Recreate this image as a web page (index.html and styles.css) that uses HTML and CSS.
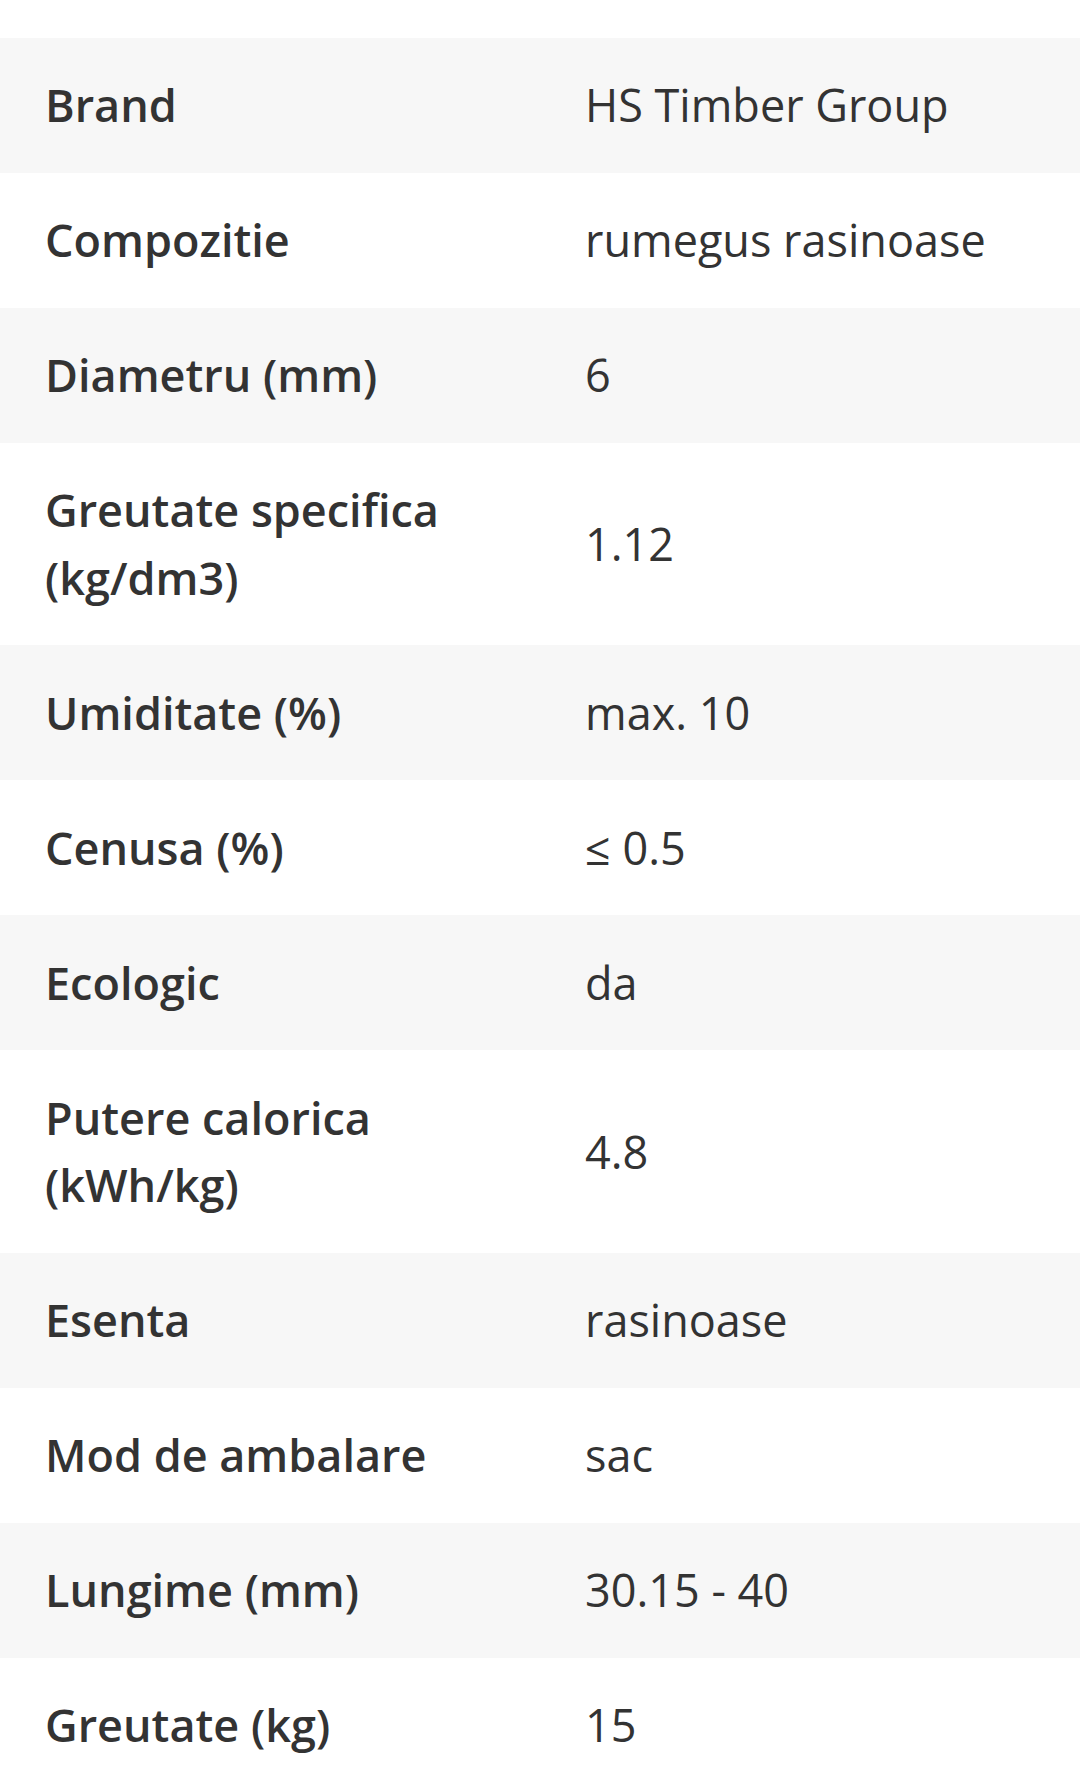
FILE: index.html
```html
<!DOCTYPE html>
<html lang="ro">
<head>
<meta charset="utf-8">
<title>Specificatii</title>
<link rel="stylesheet" href="styles.css">
</head>
<body>
<div class="page">
  <table class="specs">
    <tbody>
      <tr><th>Brand</th><td>HS Timber Group</td></tr>
      <tr><th>Compozitie</th><td>rumegus rasinoase</td></tr>
      <tr><th>Diametru (mm)</th><td>6</td></tr>
      <tr><th>Greutate specifica (kg/dm3)</th><td>1.12</td></tr>
      <tr><th>Umiditate (%)</th><td>max. 10</td></tr>
      <tr><th>Cenusa (%)</th><td>≤ 0.5</td></tr>
      <tr><th>Ecologic</th><td>da</td></tr>
      <tr><th>Putere calorica (kWh/kg)</th><td>4.8</td></tr>
      <tr><th>Esenta</th><td>rasinoase</td></tr>
      <tr><th>Mod de ambalare</th><td>sac</td></tr>
      <tr><th>Lungime (mm)</th><td>30.15 - 40</td></tr>
      <tr><th>Greutate (kg)</th><td>15</td></tr>
    </tbody>
  </table>
</div>
</body>
</html>
```

FILE: styles.css
```css
html, body {
  margin: 0;
  padding: 0;
  background: #ffffff;
}

body {
  font-family: "Open Sans", "Noto Sans", "Liberation Sans", sans-serif;
  color: #333333;
  font-size: 45px;
  line-height: 67.5px;
}

.page {
  padding-top: 37.5px;
}

.specs {
  width: 100%;
  border-collapse: collapse;
  table-layout: fixed;
}

.specs th,
.specs td {
  width: 50%;
  padding: 33.75px 45px;
  text-align: left;
  vertical-align: middle;
}

.specs th {
  font-weight: 600;
}

.specs td {
  font-weight: 400;
}

.specs tr:nth-child(odd) {
  background: #f7f7f7;
}
```
